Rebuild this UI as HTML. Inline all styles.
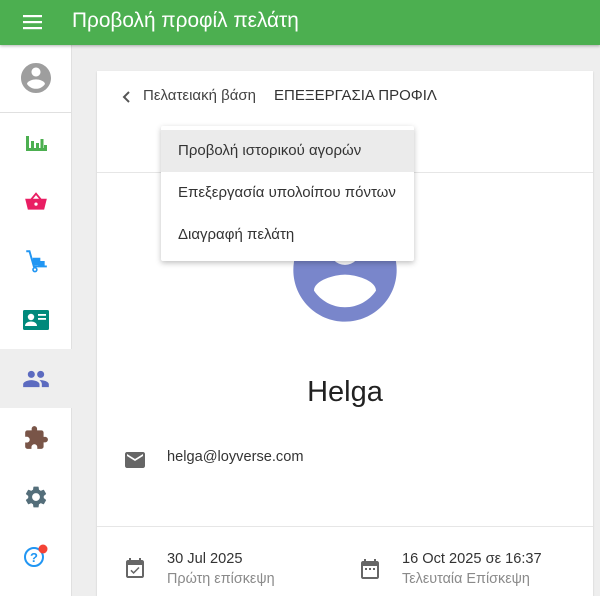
<!DOCTYPE html>
<html><head><meta charset="utf-8"><style>
*{box-sizing:border-box;margin:0;padding:0}
html,body{width:600px;height:596px;overflow:hidden}
body{background:#eeeeee;font-family:"Liberation Sans",sans-serif;position:relative;color:#212121}
.hdr{position:absolute;left:0;top:0;width:600px;height:45px;background:#4caf50;box-shadow:0 1px 3px rgba(0,0,0,.3);z-index:3}
.hdr .t{position:absolute;left:72px;top:9px;color:#fff;font-size:20.8px}
.side{position:absolute;left:0;top:45px;width:72px;height:551px;background:#fff;border-right:1px solid #e0e0e0}
.ic{position:absolute;left:0;width:72px;height:59px;display:flex;align-items:center;justify-content:center}
.card{position:absolute;left:97px;top:71px;width:496px;height:525px;background:#fff;box-shadow:0 1px 2px rgba(0,0,0,.15)}
.hr{position:absolute;left:0;width:496px;height:1px;background:#e6e6e6}
.menu{position:absolute;left:161px;top:126px;width:253px;height:135px;background:#fff;box-shadow:0 2px 6px rgba(0,0,0,.25);border-radius:2px;padding-top:4px;z-index:5}
.mi{height:42px;line-height:42px;padding-left:17px;font-size:15px;color:#333}
.mi.sel{background:#ebebeb}
.tx{position:absolute;font-size:14px;color:#333}
.sub{position:absolute;font-size:14px;color:#8a8a8a}
</style></head><body>
<div class="hdr">
<svg style="position:absolute;left:22px;top:12px" width="22" height="20" viewBox="0 0 22 20"><rect x="1" y="3" width="19" height="2.2" fill="#fff"/><rect x="1" y="9" width="19" height="2.2" fill="#fff"/><rect x="1" y="15" width="19" height="2.2" fill="#fff"/></svg>
<div class="t">Προβολή προφίλ πελάτη</div></div>
<div class="side">
<div class="ic" style="top:3px;height:60px"><svg width="36" height="36" viewBox="0 0 24 24"><path fill="#9e9e9e" d="M12 2C6.48 2 2 6.48 2 12s4.48 10 10 10 10-4.48 10-10S17.52 2 12 2zm0 3c1.66 0 3 1.34 3 3s-1.34 3-3 3-3-1.34-3-3 1.34-3 3-3zm0 14.2c-2.5 0-4.71-1.28-6-3.22.03-1.99 4-3.08 6-3.08 1.99 0 5.97 1.09 6 3.08-1.29 1.94-3.5 3.22-6 3.22z"/></svg></div>
<div style="position:absolute;left:0;top:67px;width:71px;height:1px;background:#e0e0e0"></div>
<div class="ic" style="top:68px"><svg width="24" height="24" viewBox="0 0 24 24"><path fill="#4caf50" d="M2 5h3v15H2zM5 17h17v3H5zM7 10h3v8H7zM12 12h3v6h-3zM16.5 8h3v10h-3zM20 14h3v6h-3z"/></svg></div>
<div class="ic" style="top:127px"><svg width="26" height="26" viewBox="0 0 24 24"><path fill="#e91e63" d="M12 3l-5 6H2l2.5 10h15L22 9h-5zM9.2 9L12 5.6 14.8 9zM12 12.5a1.5 1.5 0 110 3 1.5 1.5 0 010-3z"/></svg></div>
<div class="ic" style="top:186px"><svg width="26" height="26" viewBox="0 0 24 24"><path fill="none" stroke="#2196f3" stroke-width="1.8" d="M3 3h3l4 14h12"/><circle cx="11" cy="20" r="1.8" fill="none" stroke="#2196f3" stroke-width="1.5"/><rect x="9" y="9" width="7" height="7" fill="#2196f3"/><rect x="14" y="12" width="6" height="5" fill="#2196f3"/></svg></div>
<div class="ic" style="top:245px"><svg width="28" height="24" viewBox="0 0 28 24"><rect x="1" y="2" width="26" height="20" rx="1.5" fill="#00897b"/><circle cx="9" cy="9" r="3.2" fill="#fff"/><path fill="#fff" d="M3 18c0-3 3-4.5 6-4.5s6 1.5 6 4.5z"/><rect x="16" y="6" width="8" height="1.8" fill="#fff"/><rect x="16" y="10" width="8" height="1.8" fill="#fff"/></svg></div>
<div class="ic" style="top:304px;background:#eeeeee"><svg width="28" height="28" viewBox="0 0 24 24"><path fill="#5c6bc0" d="M16 11c1.66 0 2.99-1.34 2.99-3S17.66 5 16 5c-1.66 0-3 1.34-3 3s1.34 3 3 3zm-8 0c1.66 0 2.99-1.34 2.99-3S9.66 5 8 5C6.34 5 5 6.34 5 8s1.34 3 3 3zm0 2c-2.33 0-7 1.17-7 3.5V19h14v-2.5c0-2.33-4.67-3.5-7-3.5zm8 0c-.29 0-.62.02-.97.05 1.16.84 1.97 1.970 1.97 3.45V19h6v-2.5c0-2.33-4.67-3.5-7-3.5z"/></svg></div>
<div class="ic" style="top:363px"><svg width="26" height="26" viewBox="0 0 24 24"><path fill="#795548" d="M20.5 11H19V7c0-1.1-.9-2-2-2h-4V3.5C13 2.12 11.88 1 10.5 1S8 2.12 8 3.5V5H4c-1.1 0-1.99.9-1.99 2v3.8H3.5c1.49 0 2.7 1.21 2.7 2.7s-1.21 2.7-2.7 2.7H2V20c0 1.1.9 2 2 2h3.8v-1.5c0-1.490 1.21-2.7 2.7-2.7 1.49 0 2.7 1.21 2.7 2.7V22H17c1.1 0 2-.9 2-2v-4h1.5c1.38 0 2.5-1.12 2.5-2.5S21.88 11 20.5 11z"/></svg></div>
<div class="ic" style="top:422px"><svg width="26" height="26" viewBox="0 0 24 24"><path fill="#546e7a" d="M19.14 12.94c.04-.3.06-.61.06-.94 0-.32-.02-.64-.07-.94l2.03-1.58a.49.49 0 00.12-.61l-1.92-3.32a.49.49 0 00-.59-.22l-2.390.96c-.5-.38-1.03-.7-1.62-.94l-.36-2.54a.48.48 0 00-.48-.41h-3.84c-.24 0-.43.17-.47.41l-.36 2.54c-.59.24-1.13.57-1.62.94l-2.39-.96a.49.49 0 00-.59.22L2.74 8.87c-.12.21-.08.47.12.61l2.03 1.58c-.05.3-.09.63-.09.94s.02.64.07.94l-2.03 1.58a.49.49 0 00-.12.61l1.92 3.32c.12.22.37.29.59.22l2.39-.96c.5.38 1.03.7 1.62.94l.36 2.54c.05.24.24.41.48.41h3.84c.24 0 .44-.17.47-.41l.36-2.54c.59-.24 1.13-.56 1.62-.94l2.39.96c.22.08.47 0 .59-.22l1.92-3.32c.12-.22.07-.47-.12-.61l-2.01-1.58zM12 15.6c-1.98 0-3.6-1.62-3.6-3.6s1.62-3.6 3.6-3.6 3.6 1.62 3.6 3.6-1.62 3.6-3.6 3.6z"/></svg></div>
<div class="ic" style="top:481px"><svg width="28" height="28" viewBox="0 0 28 28"><circle cx="12" cy="15" r="9" fill="none" stroke="#2196f3" stroke-width="2"/><text x="12" y="20" font-size="13" font-weight="bold" text-anchor="middle" fill="#2196f3" font-family="Liberation Sans">?</text><circle cx="21" cy="7" r="4.5" fill="#f44336"/></svg></div>
</div>
<div class="card">
<svg style="position:absolute;left:24px;top:18px" width="12" height="16" viewBox="0 0 12 16"><path d="M8 3L3 8l5 5" fill="none" stroke="#555" stroke-width="2"/></svg>
<div class="tx" style="left:46px;top:16px;font-size:15px;color:#444">Πελατειακή βάση</div>
<div class="tx" style="left:177px;top:16px;font-size:15px;color:#333">ΕΠΕΞΕΡΓΑΣΙΑ ΠΡΟΦΙΛ</div>
<div class="hr" style="top:101px"></div>
<svg style="position:absolute;left:186px;top:137px" width="124" height="124" viewBox="0 0 24 24"><path fill="#7986cb" d="M12 2C6.48 2 2 6.480 2 12s4.48 10 10 10 10-4.48 10-10S17.52 2 12 2zm0 3c1.66 0 3 1.34 3 3s-1.34 3-3 3-3-1.34-3-3 1.34-3 3-3zm0 14.2c-2.5 0-4.71-1.28-6-3.22.03-1.99 4-3.08 6-3.08 1.99 0 5.97 1.09 6 3.08-1.29 1.94-3.5 3.22-6 3.22z"/></svg>
<div class="tx" style="left:0;width:496px;text-align:center;top:305px;font-size:29px;color:#212121">Helga</div>
<svg style="position:absolute;left:26px;top:377px" width="24" height="24" viewBox="0 0 24 24"><path fill="#666" d="M20 4H4c-1.1 0-2 .9-2 2v12c0 1.1.9 2 2 2h16c1.1 0 2-.9 2-2V6c0-1.1-.9-2-2-2zm0 4l-8 5-8-5V6l8 5 8-5v2z"/></svg>
<div class="tx" style="left:70px;top:378px;font-size:14.6px">helga@loyverse.com</div>
<div class="hr" style="top:455px"></div>
<svg style="position:absolute;left:26px;top:486px" width="24" height="24" viewBox="0 0 24 24"><path fill="#666" d="M16.53 11.06L15.47 10l-4.88 4.88-2.12-2.12-1.06 1.06L10.59 17l5.94-5.94zM19 3h-1V1h-2v2H8V1H6v2H5c-1.11 0-2 .9-2 2v14c0 1.1.89 2 2 2h14c1.1 0 2-.9 2-2V5c0-1.1-.9-2-2-2zm0 16H5V8h14v11z"/></svg>
<div class="tx" style="left:70px;top:480px;font-size:14.6px">30 Jul 2025</div>
<div class="sub" style="left:70px;top:500px;font-size:14.4px">Πρώτη επίσκεψη</div>
<svg style="position:absolute;left:261px;top:486px" width="24" height="24" viewBox="0 0 24 24"><path fill="#666" d="M9 11H7v2h2v-2zm4 0h-2v2h2v-2zm4 0h-2v2h2v-2zm2-7h-1V2h-2v2H8V2H6v2H5c-1.11 0-2 .9-2 2v14c0 1.1.89 2 2 2h14c1.1 0 2-.9 2-2V6c0-1.1-.9-2-2-2zm0 16H5V9h14v11z"/></svg>
<div class="tx" style="left:305px;top:480px;font-size:14.6px">16 Oct 2025 σε 16:37</div>
<div class="sub" style="left:305px;top:500px;font-size:14.4px">Τελευταία Επίσκεψη</div>
</div>
<div class="menu">
<div class="mi sel">Προβολή ιστορικού αγορών</div>
<div class="mi">Επεξεργασία υπολοίπου πόντων</div>
<div class="mi">Διαγραφή πελάτη</div>
</div>
</body></html>
